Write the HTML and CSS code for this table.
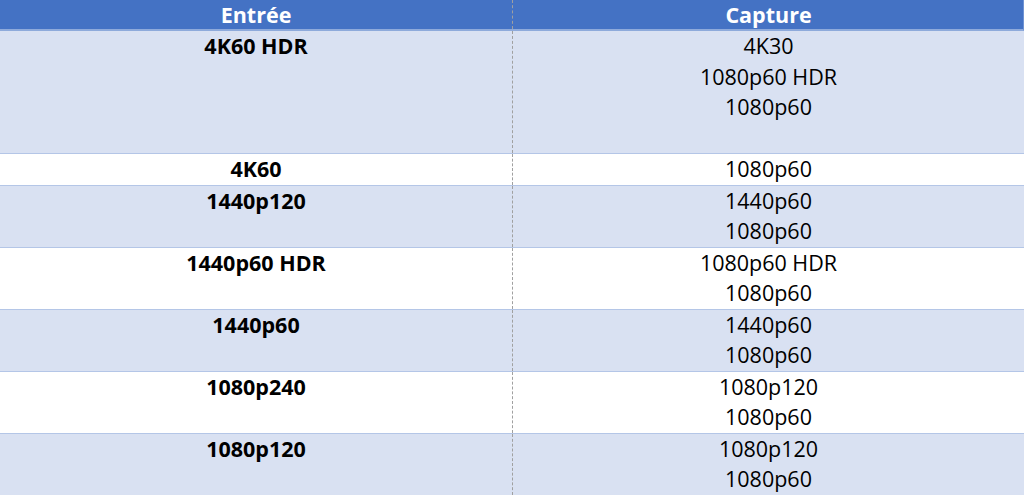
FILE: index.html
```html
<!DOCTYPE html>
<html lang="fr">
<head>
<meta charset="utf-8">
<title>Entrée / Capture</title>
<link rel="stylesheet" href="styles.css">
</head>
<body>
<div class="table">
  <div class="row head">
    <div class="cell">Entrée</div>
    <div class="cell">Capture</div>
  </div>
  <div class="row band tall">
    <div class="cell in">4K60 HDR</div>
    <div class="cell out">4K30<br>1080p60 HDR<br>1080p60</div>
  </div>
  <div class="row">
    <div class="cell in">4K60</div>
    <div class="cell out">1080p60</div>
  </div>
  <div class="row band">
    <div class="cell in">1440p120</div>
    <div class="cell out">1440p60<br>1080p60</div>
  </div>
  <div class="row">
    <div class="cell in">1440p60 HDR</div>
    <div class="cell out">1080p60 HDR<br>1080p60</div>
  </div>
  <div class="row band">
    <div class="cell in">1440p60</div>
    <div class="cell out">1440p60<br>1080p60</div>
  </div>
  <div class="row">
    <div class="cell in">1080p240</div>
    <div class="cell out">1080p120<br>1080p60</div>
  </div>
  <div class="row band">
    <div class="cell in">1080p120</div>
    <div class="cell out">1080p120<br>1080p60</div>
  </div>
</div>
</body>
</html>
```

FILE: styles.css
```css
html, body {
  margin: 0;
  padding: 0;
  background: #ffffff;
}

body {
  width: 1024px;
  height: 495px;
  overflow: hidden;
  font-family: "Open Sans", "Liberation Sans", sans-serif;
  font-size: 21.5px;
  color: #000000;
}

.table {
  display: flex;
  flex-direction: column;
  width: 1024px;
}

.row {
  display: grid;
  grid-template-columns: 512px 512px;
  border-top: 1px solid #b4c6e7;
  line-height: 30.5px;
}

.band {
  background: #d9e1f2;
}

.tall {
  height: 122px;
}

.cell {
  text-align: center;
}

.cell + .cell {
  border-left: 1px dashed #a0a0a0;
}

.in {
  font-weight: 700;
}

.head {
  background: #4472c4;
  color: #ffffff;
  font-weight: 700;
  height: 29px;
  line-height: 29px;
  border-top: 1px solid #5b84cc;
  border-right: 1px solid #6f93d3;
  border-bottom: 2px solid #8eaadb;
  margin-top: -1px;
}

.head + .row {
  border-top: none;
}
```
